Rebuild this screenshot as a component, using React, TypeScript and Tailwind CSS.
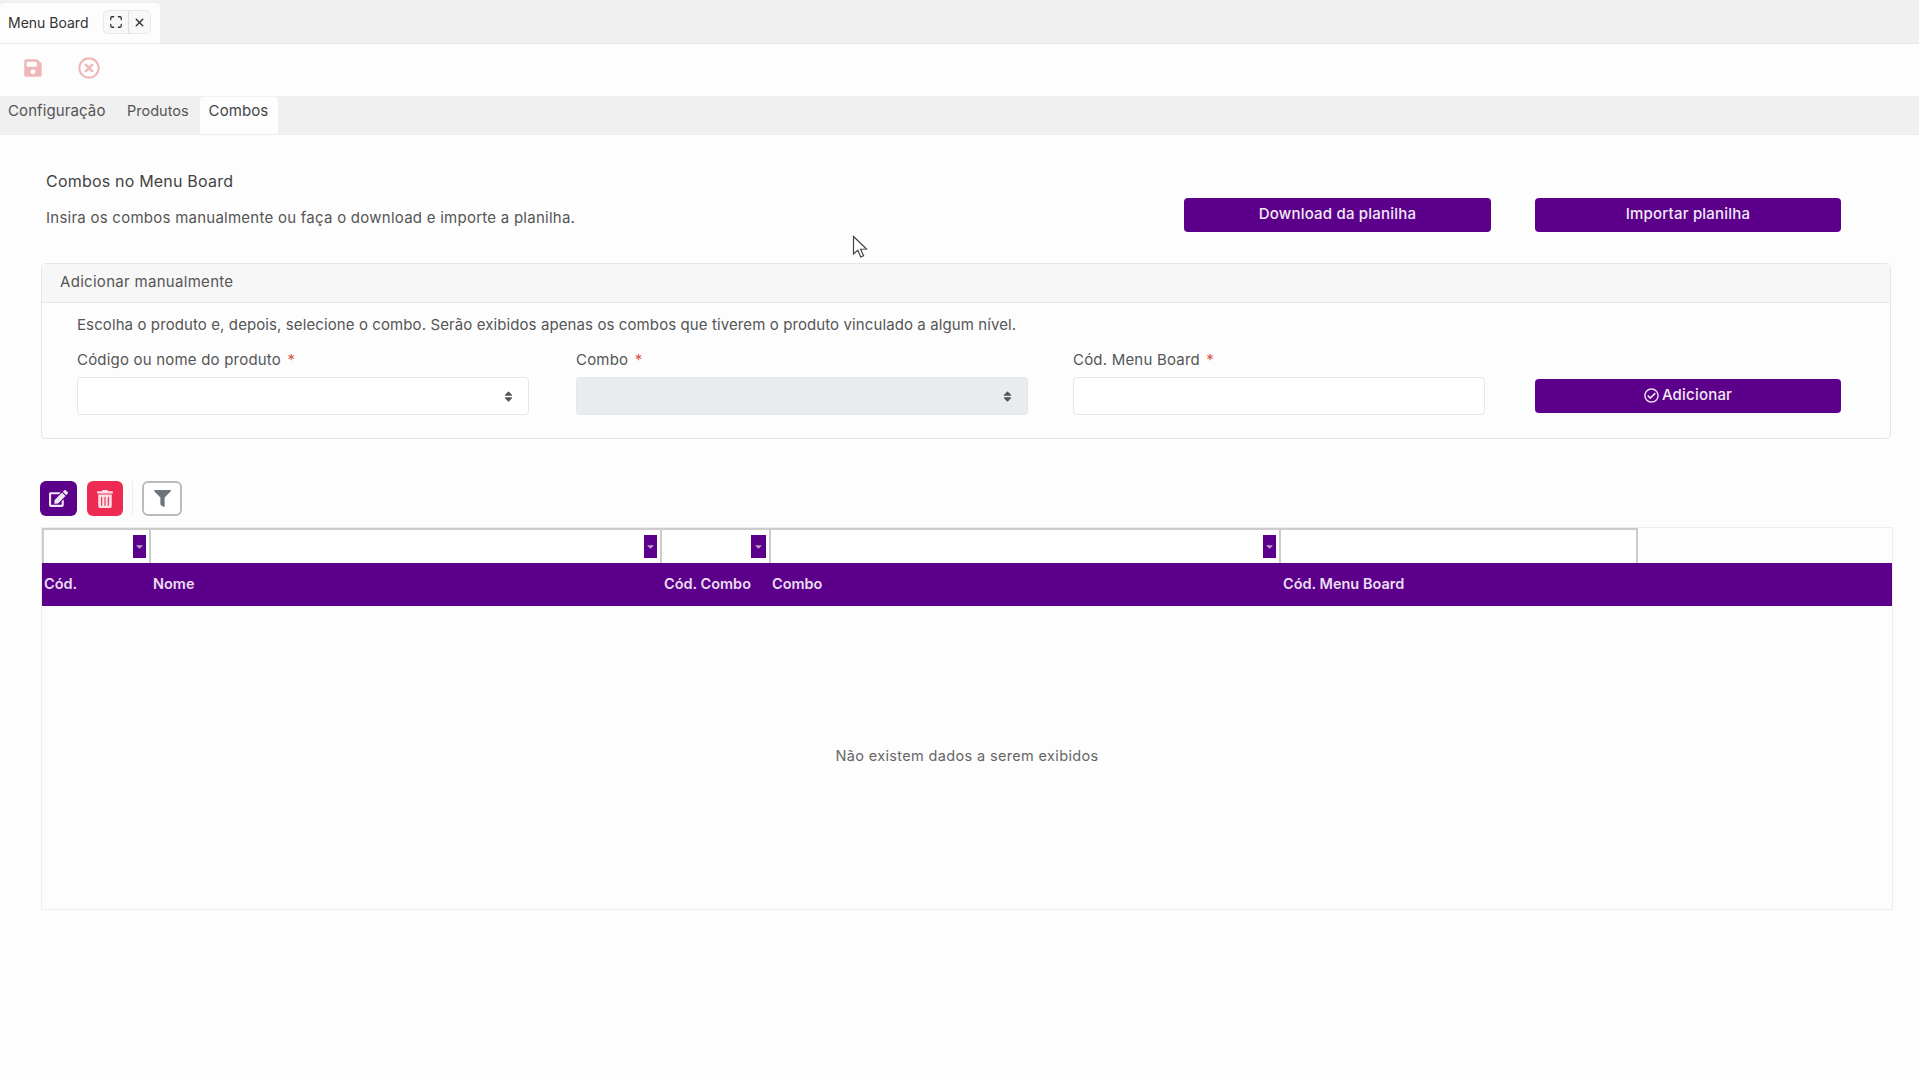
import { FaSave, FaRegTimesCircle, FaEdit, FaTrashAlt, FaFilter, FaSort, FaRegCheckCircle, FaCaretDown } from "react-icons/fa";
import { Maximize, X } from "lucide-react";

const purple = "bg-[#5c008b]";

function PurpleButton({ children, className = "" }: { children: React.ReactNode; className?: string }) {
  return (
    <button className={`${purple} flex h-[34px] items-center justify-center gap-[3px] rounded-[4px] pb-[2px] text-[15px] font-medium tracking-[0.2px] text-[#f1e9f5] ${className}`}>
      {children}
    </button>
  );
}

function Label({ text }: { text: string }) {
  return (
    <div className="mb-[8px] h-[18px] text-[15px] leading-[18px] tracking-[0.2px] text-[#555]">
      {text} <span className="ml-[2px] text-[#d9534f]">*</span>
    </div>
  );
}

function SelectBox({ disabled }: { disabled?: boolean }) {
  return (
    <div className={`flex h-[38px] items-center justify-end rounded-[4px] border border-[#e6e6e6] pr-[13px] text-[#555] ${disabled ? "bg-[#e9ecef]" : "bg-white"}`}>
      <FaSort className="size-[13px]" />
    </div>
  );
}

function FilterCell({ wide }: { wide?: boolean }) {
  return (
    <div className="flex h-full items-center justify-end border-r-2 border-[#ccc] pr-[3px]">
      <div className={`${purple} flex h-[23px] items-center justify-center text-[#b9a0c9] ${wide ? "w-[15px]" : "w-[13px]"}`}>
        <FaCaretDown className="size-[11px]" />
      </div>
    </div>
  );
}

const gridCols = "grid grid-cols-[108px_511px_109px_510px_358px_1fr]";

export default function App() {
  return (
    <div className="relative h-[1079px] w-full overflow-hidden bg-[#fdfdfd] font-['Inter',sans-serif] text-[#444]">
      {/* window tabs */}
      <div className="flex h-[44px] items-end border-b border-[#e8e8e8] bg-[#f0f0f0]">
        <div className="flex h-[40px] w-[160px] items-center rounded-t-[4px] bg-[#fdfdfd] pb-[2px] pl-[8px]">
          <span className="w-[95px] text-[14px] text-[#333]">Menu Board</span>
          <div className="flex h-[24px] w-[48px] items-center rounded-[5px] border border-[#e8e8e8] bg-[#f8f8f8] text-[#333]">
            <div className="flex h-full w-[25px] items-center justify-center border-r border-[#ddd]">
              <Maximize className="size-[14px]" strokeWidth={2.2} />
            </div>
            <div className="flex h-full flex-1 items-center justify-center">
              <X className="size-[13px]" strokeWidth={2.6} />
            </div>
          </div>
        </div>
      </div>

      {/* toolbar */}
      <div className="flex h-[52px] items-center pb-[4px] pl-[23px] text-[#efb7b7]">
        <FaSave className="size-[20px]" />
        <FaRegTimesCircle className="ml-[35px] size-[22px]" />
      </div>

      {/* page tabs */}
      <div className="flex h-[39px] items-end border-b border-[#eee] bg-[#f0f0f0] text-[15px] tracking-[0.1px] text-[#555]">
        <div className="flex h-[37px] w-[127px] items-center pb-[8px] pl-[8px]">Configuração</div>
        <div className="flex h-[37px] w-[73px] items-center pb-[9px] text-[14.5px] tracking-normal">Produtos</div>
        <div className="flex h-[37px] w-[78px] items-center justify-center rounded-t-[4px] bg-[#fdfdfd] pb-[8px] pr-[1px] text-[#444]">Combos</div>
      </div>

      {/* heading */}
      <div className="flex h-[128px] items-start">
        <div className="ml-[46px] w-[1138px] pt-[36px]">
          <h2 className="h-[20px] text-[16px] leading-[20px] tracking-[0.2px] text-[#444]">Combos no Menu Board</h2>
          <p className="mt-[18px] text-[15px] leading-[18px] tracking-[0.25px] text-[#555]">
            Insira os combos manualmente ou faça o download e importe a planilha.
          </p>
        </div>
        <div className="flex gap-[44px] pt-[63px]">
          <PurpleButton className="w-[307px]">Download da planilha</PurpleButton>
          <PurpleButton className="w-[306px]">Importar planilha</PurpleButton>
        </div>
      </div>

      {/* add manually */}
      <section className="ml-[41px] h-[176px] w-[1850px] rounded-[5px] border border-[#e6e6e6]">
        <div className="flex h-[39px] items-center border-b border-[#e6e6e6] bg-[#f7f7f7] pb-[2px] pl-[18px] text-[15px] tracking-[0.3px] text-[#555]">
          Adicionar manualmente
        </div>
        <div className="pl-[35px] pt-[13px]">
          <p className="h-[18px] text-[15px] leading-[18px] tracking-[0.1px] text-[#555]">
            Escolha o produto e, depois, selecione o combo. Serão exibidos apenas os combos que tiverem o produto vinculado a algum nível.
          </p>
          <div className="mt-[17px] flex items-end">
            <div className="w-[452px]">
              <Label text="Código ou nome do produto" />
              <SelectBox />
            </div>
            <div className="ml-[47px] w-[452px]">
              <Label text="Combo" />
              <SelectBox disabled />
            </div>
            <div className="ml-[45px] w-[412px]">
              <Label text="Cód. Menu Board" />
              <div className="h-[38px] rounded-[4px] border border-[#e6e6e6] bg-white" />
            </div>
            <PurpleButton className="mb-[2px] ml-[50px] w-[306px]">
              <FaRegCheckCircle className="size-[15px]" />
              Adicionar
            </PurpleButton>
          </div>
        </div>
      </section>

      {/* grid toolbar */}
      <div className="ml-[40px] mt-[42px] flex h-[35px] items-center">
        <div className={`${purple} flex h-[35px] w-[37px] items-center justify-center rounded-[6px] text-[#efe6f4]`}>
          <FaEdit className="size-[19px]" />
        </div>
        <div className="ml-[10px] flex h-[35px] w-[36px] items-center justify-center rounded-[6px] bg-[#ee2b53] text-[#fbdfe5]">
          <FaTrashAlt className="size-[18px]" />
        </div>
        <div className="ml-[9px] h-[35px] w-px bg-[#eee]" />
        <div className="ml-[9px] flex h-[35px] w-[40px] items-center justify-center rounded-[6px] border-2 border-[#bbb] bg-white text-[#6c757d]">
          <FaFilter className="size-[17px]" />
        </div>
      </div>

      {/* grid */}
      <div className="ml-[41px] mt-[11px] h-[383px] w-[1852px] border border-t-0 border-[#eee]">
        <div className={`${gridCols} h-[36px] border-t border-[#eee]`}>
          <div className="col-span-5 grid grid-cols-[107px_511px_109px_510px_357px] border-2 border-b-0 border-[#ccc] bg-white">
            <FilterCell />
            <FilterCell />
            <FilterCell wide />
            <FilterCell />
            <div />
          </div>
        </div>
        <div className={`${gridCols} ${purple} h-[43px] items-center pb-[1px] text-[14.5px] font-semibold text-[#e9dff0]`}>
          <div className="pl-[2px]">Cód.</div>
          <div className="pl-[3px]">Nome</div>
          <div className="pl-[3px]">Cód. Combo</div>
          <div className="pl-[2px]">Combo</div>
          <div className="pl-[3px]">Cód. Menu Board</div>
        </div>
        <div className="flex h-[303px] items-center justify-center pb-[3px] text-[14.5px] tracking-[0.35px] text-[#666]">
          Não existem dados a serem exibidos
        </div>
      </div>

      {/* mouse pointer */}
      <svg className="absolute left-[852px] top-[235px] h-[24px] w-[16px]" viewBox="0 0 16 24">
        <path d="M1.5 1.5 L1.5 19 L5.8 15.2 L8.8 22 L11.6 20.8 L8.6 14.2 L14.5 14 Z" fill="#fff" stroke="#444" strokeWidth="1.2" />
      </svg>
    </div>
  );
}
